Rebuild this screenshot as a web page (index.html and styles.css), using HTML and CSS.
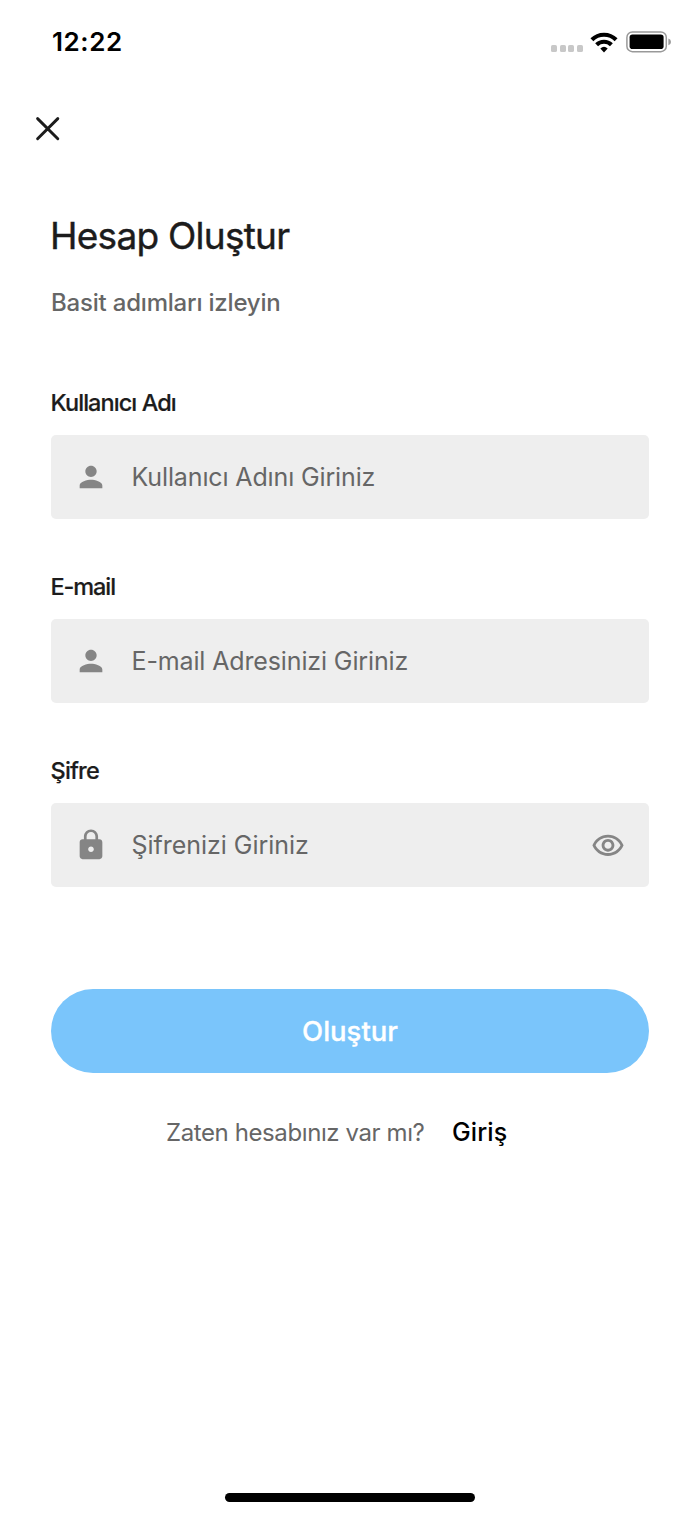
FILE: index.html
```html
<!DOCTYPE html>
<html lang="tr">
<head>
<meta charset="utf-8">
<title>Hesap Oluştur</title>
<link rel="stylesheet" href="styles.css">
</head>
<body>
<div class="screen">
  <header class="status">
    <span class="time">12:22</span>
    <div class="indicators">
      <div class="signal"><i></i><i></i><i></i><i></i></div>
      <svg class="wifi" width="28" height="21" viewBox="0 0 28 21"><g fill="none" stroke="#000" stroke-width="4.1"><path d="M1.9 7.8A17.2 17.2 0 0 1 26.1 7.8"/><path d="M6.6 12.7A10.6 10.6 0 0 1 21.4 12.7"/></g><path d="M10.3 16.4Q14 13.2 17.7 16.4L14 20.4Z"/></svg>
      <svg class="battery" width="46" height="22" viewBox="0 0 46 22"><rect x=".9" y=".9" width="39.4" height="19.8" rx="5.5" fill="none" stroke="#999" stroke-width="1.5"/><rect x="3.6" y="3.6" width="34" height="14.4" rx="2.8"/><path d="M42.4 7.6Q45 8.6 45 10.9T42.4 14.2Z" fill="#999"/></svg>
    </div>
  </header>
  <nav class="toolbar">
    <svg class="close" width="26" height="26" viewBox="0 0 26 26"><path d="M2.6 2.6 22.8 22.8M22.8 2.6 2.6 22.8"/></svg>
  </nav>
  <main class="content">
    <h1 class="title">Hesap Oluştur</h1>
    <p class="subtitle">Basit adımları izleyin</p>
    <section class="group">
      <div class="label">Kullanıcı Adı</div>
      <div class="field">
        <svg class="icon" viewBox="0 0 24 24"><path d="M12 12c2.21 0 4-1.79 4-4s-1.79-4-4-4-4 1.79-4 4 1.79 4 4 4zm0 2c-2.67 0-8 1.34-8 4v2h16v-2c0-2.66-5.33-4-8-4z"/></svg>
        <span class="hint">Kullanıcı Adını Giriniz</span>
      </div>
    </section>
    <section class="group">
      <div class="label label-mail">E-mail</div>
      <div class="field">
        <svg class="icon" viewBox="0 0 24 24"><path d="M12 12c2.21 0 4-1.79 4-4s-1.79-4-4-4-4 1.79-4 4 1.79 4 4 4zm0 2c-2.67 0-8 1.34-8 4v2h16v-2c0-2.66-5.33-4-8-4z"/></svg>
        <span class="hint">E-mail Adresinizi Giriniz</span>
      </div>
    </section>
    <section class="group">
      <div class="label label-pass">Şifre</div>
      <div class="field">
        <svg class="icon" viewBox="0 0 24 24"><path d="M18 8h-1V6c0-2.76-2.24-5-5-5S7 3.24 7 6v2H6c-1.1 0-2 .9-2 2v10c0 1.1.9 2 2 2h12c1.1 0 2-.9 2-2V10c0-1.1-.9-2-2-2zm-6 9c-1.1 0-2-.9-2-2s.9-2 2-2 2 .9 2 2-.9 2-2 2zm3.1-9H8.9V6c0-1.71 1.39-3.1 3.1-3.1s3.1 1.39 3.1 3.1v2z"/></svg>
        <span class="hint hint-pass">Şifrenizi Giriniz</span>
        <svg class="icon eye" viewBox="0 0 24 24"><path d="M12 6c3.79 0 7.17 2.13 8.82 5.5C19.17 14.87 15.79 17 12 17s-7.17-2.13-8.82-5.5C4.83 8.13 8.21 6 12 6m0-2C7 4 2.73 7.11 1 11.5 2.73 15.89 7 19 12 19s9.27-3.11 11-7.5C21.27 7.11 17 4 12 4zm0 5c1.38 0 2.5 1.12 2.5 2.5S13.38 14 12 14s-2.5-1.12-2.5-2.5S10.62 9 12 9m0-2c-2.48 0-4.5 2.02-4.5 4.5S9.52 16 12 16s4.5-2.02 4.5-4.5S14.48 7 12 7z"/></svg>
      </div>
    </section>
    <div class="submit">Oluştur</div>
    <div class="signin"><span class="question">Zaten hesabınız var mı?</span><span class="login">Giriş</span></div>
  </main>
  <footer class="home"><div class="bar"></div></footer>
</div>
</body>
</html>
```
FILE: styles.css
```css
* { box-sizing: border-box; }
body { margin: 0; background: #fff; font-family: Inter, "Noto Sans", sans-serif; }
.screen { width: 700px; height: 1515px; display: flex; flex-direction: column; overflow: hidden; }
.status { height: 84px; padding: 0 28px 0 52px; display: flex; align-items: center; justify-content: space-between; }
.time { font-size: 26px; font-weight: 600; color: #000; line-height: 32px; letter-spacing: .55px; }
.indicators { display: flex; align-items: center; }
.signal { display: flex; gap: 2.4px; margin: 13px 7px 0 0; }
.signal i { width: 6.2px; height: 6.2px; border-radius: 1.6px; background: #c8c8c8; }
.wifi { margin-right: 8px; }
.toolbar { height: 89px; padding-left: 35px; display: flex; align-items: center; }
.close { fill: none; stroke: #1c1c1c; stroke-width: 2.9px; stroke-linecap: round; }
.content { padding: 38px 51px 0; flex: 1; }
.title { margin: 0 0 0 -1px; font-size: 37px; line-height: 50px; font-weight: 400; color: #1c1c1c; white-space: nowrap; letter-spacing: -.74px; -webkit-text-stroke: .4px #1c1c1c; }
.subtitle { margin: 26px 0 67.5px; font-size: 24px; line-height: 32px; font-weight: 500; color: #666; letter-spacing: -.2px; }
.label { height: 32px; font-size: 23.5px; line-height: 32px; font-weight: 500; color: #1c1c1c; letter-spacing: -.93px; margin: 0 0 16px -.5px; -webkit-text-stroke: .2px #1c1c1c; }
.label-mail { letter-spacing: -1.1px; }
.label-pass { letter-spacing: -.8px; }
.group { margin-bottom: 52px; }
.field { height: 84.3px; border-radius: 5px; background: #eee; padding: 0 24px 0 23px; display: flex; align-items: center; }
.icon { width: 34px; height: 34px; flex: none; fill: #858585; }
.hint { font-size: 25px; line-height: 34px; color: #666; margin-left: 23.5px; white-space: nowrap; letter-spacing: -.13px; }
.hint-pass { letter-spacing: -.03px; }
.eye { margin-left: auto; margin-top: 1px; }
.submit { margin-top: 101.5px; height: 84.5px; border-radius: 43px; background: #7ac5fb; display: flex; align-items: center; justify-content: center; color: #fff; font-size: 27.5px; font-weight: 500; -webkit-text-stroke: .3px #fff; }
.signin { margin-top: 42px; height: 34px; padding-left: 115px; display: flex; align-items: center; gap: 27px; white-space: nowrap; }
.question { width: 259px; font-size: 24px; color: #666; letter-spacing: -.4px; }
.login { font-size: 25px; font-weight: 500; color: #000; letter-spacing: .1px; }
.home { height: 36px; padding-top: 14px; display: flex; justify-content: center; }
.bar { width: 250px; height: 8.5px; border-radius: 5px; background: #000; }
```
